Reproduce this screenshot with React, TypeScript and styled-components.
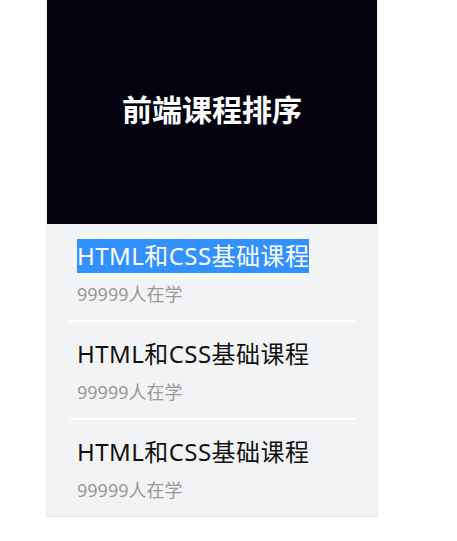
import React from 'react';
import styled, { createGlobalStyle } from 'styled-components';

const GlobalStyle = createGlobalStyle`
  html, body {
    margin: 0;
    padding: 0;
    background: #fff;
  }
  body {
    font-family: "Noto Sans", "Noto Sans CJK SC", sans-serif;
  }
`;

const Panel = styled.div`
  width: 330px;
  margin-left: 46px;
  background: #f2f3f5;
  border: 1px solid #e6e7e9;
  border-top: none;
`;

const Header = styled.div`
  height: 224px;
  background: #03030f;
  display: flex;
  align-items: center;
  justify-content: center;
`;

const Title = styled.h2`
  margin: 0 0 8px;
  color: #fff;
  font-size: 30px;
  font-weight: 700;
  font-family: "Noto Sans CJK SC", sans-serif;
`;

const CourseList = styled.ul`
  list-style: none;
  margin: 0;
  padding: 0 22px 0 23px;
`;

const CourseItem = styled.li`
  padding: 17px 7px 13px;
  border-bottom: 2px solid #fff;

  &:last-child {
    border-bottom: none;
  }
`;

const CourseName = styled.div<{ $selected?: boolean }>`
  font-size: 24px;
  line-height: 30px;
  letter-spacing: 0.45px;
  color: #111;

  span {
    background: ${(p) => (p.$selected ? '#3390ff' : 'transparent')};
    color: ${(p) => (p.$selected ? '#fff' : '#111')};
    padding-bottom: 1px;
  }
`;

const Learners = styled.div`
  margin-top: 10px;
  font-size: 18px;
  line-height: 26px;
  color: #999;
`;

const courses = [
  { name: 'HTML和CSS基础课程', learners: 99999 },
  { name: 'HTML和CSS基础课程', learners: 99999 },
  { name: 'HTML和CSS基础课程', learners: 99999 },
];

const App: React.FC = () => {
  return (
    <>
      <GlobalStyle />
      <Panel>
        <Header>
          <Title>前端课程排序</Title>
        </Header>
        <CourseList>
          {courses.map((course, index) => (
            <CourseItem key={index}>
              <CourseName $selected={index === 0}>
                <span>{course.name}</span>
              </CourseName>
              <Learners>{course.learners}人在学</Learners>
            </CourseItem>
          ))}
        </CourseList>
      </Panel>
    </>
  );
};

export default App;
